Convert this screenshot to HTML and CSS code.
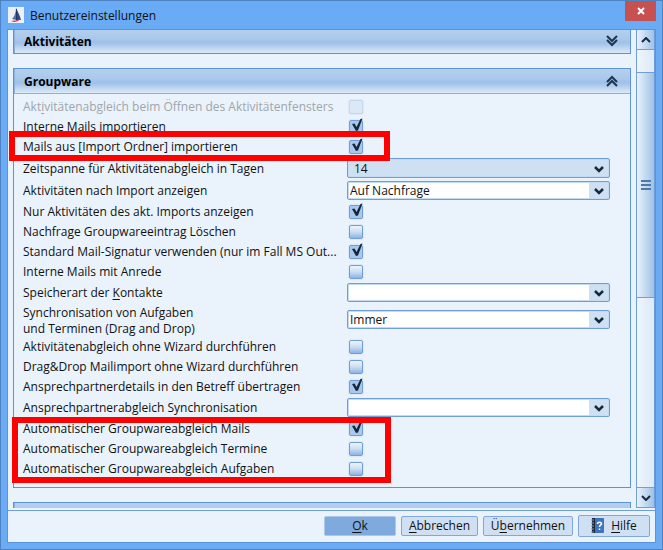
FILE: index.html
```html
<!DOCTYPE html>
<html lang="de">
<head>
    <meta charset="UTF-8">
    <meta name="viewport" content="width=device-width, initial-scale=1.0">
    <title>Benutzereinstellungen</title>
    <link rel="stylesheet" href="styles.css">
</head>
<body>
    <div class="window">
        <header class="titlebar">
            <svg class="app-icon" viewBox="0 0 16 16" aria-hidden="true">
                <rect width="16" height="16" fill="#eef0f5"/>
                <path d="M8 1v12h5C12 9 10 5 8 1z" fill="#274b86"/>
                <path d="M8 1C8 6 6 10 4 12l4 1z" fill="#54709c"/>
                <path d="M8 2h1v11H8z" fill="#1c3768"/>
                <path d="M3 14c3 0 6-1 9-2-1 2-4 3-6 3z" fill="#d0364a"/>
            </svg>
            <h1>Benutzereinstellungen</h1>
            <button class="close" type="button" aria-label="Schließen">
                <svg viewBox="0 0 8 8" aria-hidden="true"><path d="M1 1l6 6M7 1L1 7" stroke="#fff" stroke-width="2"/></svg>
            </button>
        </header>

        <form class="content">
            <div class="scroll-area">
                <div class="panels">
                    <section class="panel">
                        <div class="panel-header">
                            <h2>Aktivitäten</h2>
                            <svg class="chevron" viewBox="0 0 12 12" aria-hidden="true"><path d="M1 1l5 5 5-5M1 5l5 5 5-5"/></svg>
                        </div>
                    </section>

                    <section class="panel">
                        <div class="panel-header">
                            <h2>Groupware</h2>
                            <svg class="chevron" viewBox="0 0 12 12" aria-hidden="true"><path d="M1 7l5-5 5 5M1 11l5-5 5 5"/></svg>
                        </div>
                        <div class="panel-body">
                            <div class="row disabled">
                                <label for="openWindow">Akt<u>i</u>vitätenabgleich beim Öffnen des Aktivitätenfensters</label>
                                <input type="checkbox" id="openWindow" disabled>
                            </div>
                            <div class="row">
                                <label for="internImport">Interne Mails importieren</label>
                                <input type="checkbox" id="internImport" checked>
                            </div>
                            <div class="highlight">
                                <div class="row">
                                    <label for="folderImport">Mails aus [Import Ordner] importieren</label>
                                    <input type="checkbox" id="folderImport" checked>
                                </div>
                            </div>
                            <div class="row select-row days">
                                <label for="days">Zeitspanne für Aktivitätenabgleich in Tagen</label>
                                <select id="days"><option>14</option></select>
                            </div>
                            <div class="row select-row">
                                <label for="showAfter">Aktivitäten nach Import anzeigen</label>
                                <select id="showAfter"><option>Auf Nachfrage</option></select>
                            </div>
                            <div class="row">
                                <label for="onlyCurrent">Nur Aktivitäten des akt. Imports anzeigen</label>
                                <input type="checkbox" id="onlyCurrent" checked>
                            </div>
                            <div class="row">
                                <label for="askDelete">Nachfrage Groupwareeintrag Löschen</label>
                                <input type="checkbox" id="askDelete">
                            </div>
                            <div class="row">
                                <label for="signature">Standard Mail-Signatur verwenden (nur im Fall MS Out...</label>
                                <input type="checkbox" id="signature" checked>
                            </div>
                            <div class="row">
                                <label for="salutation">Interne Mails mit Anrede</label>
                                <input type="checkbox" id="salutation">
                            </div>
                            <div class="row select-row">
                                <label for="contacts">Speicherart der <u>K</u>ontakte</label>
                                <select id="contacts"><option></option></select>
                            </div>
                            <div class="row select-row two-lines">
                                <label for="sync">Synchronisation von Aufgaben<br>und Terminen (Drag and Drop)</label>
                                <select id="sync"><option>Immer</option></select>
                            </div>
                            <div class="row">
                                <label for="noWizard">Aktivitätenabgleich ohne Wizard durchführen</label>
                                <input type="checkbox" id="noWizard">
                            </div>
                            <div class="row">
                                <label for="dragWizard">Drag&amp;Drop Mailimport ohne Wizard durchführen</label>
                                <input type="checkbox" id="dragWizard">
                            </div>
                            <div class="row">
                                <label for="subject">Ansprechpartnerdetails in den Betreff übertragen</label>
                                <input type="checkbox" id="subject" checked>
                            </div>
                            <div class="row select-row">
                                <label for="contactSync">Ansprechpartnerabgleich Synchronisation</label>
                                <select id="contactSync"><option></option></select>
                            </div>
                            <div class="highlight auto">
                                <div class="row">
                                    <label for="autoMails">Automatischer Groupwareabgleich Mails</label>
                                    <input type="checkbox" id="autoMails" checked>
                                </div>
                                <div class="row">
                                    <label for="autoDates">Automatischer Groupwareabgleich Termine</label>
                                    <input type="checkbox" id="autoDates">
                                </div>
                                <div class="row">
                                    <label for="autoTasks">Automatischer Groupwareabgleich Aufgaben</label>
                                    <input type="checkbox" id="autoTasks">
                                </div>
                            </div>
                        </div>
                    </section>

                    <section class="panel">
                        <div class="panel-header"></div>
                    </section>
                </div>

                <div class="scrollbar">
                    <button class="scroll-button" type="button" aria-label="Nach oben">
                        <svg viewBox="0 0 10 6" aria-hidden="true"><path d="M1 5l4-4 4 4"/></svg>
                    </button>
                    <div class="track-top"></div>
                    <div class="thumb"><span></span><span></span><span></span></div>
                    <div class="track-bottom"></div>
                    <button class="scroll-button" type="button" aria-label="Nach unten">
                        <svg viewBox="0 0 10 6" aria-hidden="true"><path d="M1 1l4 4 4-4"/></svg>
                    </button>
                </div>
            </div>

            <footer class="buttons">
                <button class="primary" type="button"><span><u>O</u>k</span></button>
                <button type="button"><span><u>A</u>bbrechen</span></button>
                <button class="apply" type="button"><span>Ü<u>b</u>ernehmen</span></button>
                <button class="help" type="button">
                    <svg viewBox="0 0 14 16" aria-hidden="true">
                        <rect x="1" width="12" height="15" rx="1" fill="#3f74b8"/>
                        <rect x="1" width="3" height="15" fill="#1d2b40"/>
                        <path d="M0 2h3M0 5h3M0 8h3M0 11h3M0 14h3" stroke="#8996a8"/>
                        <path d="M6.5 6c0-2.500 4-2.500 4 0 0 1-2 1-2 3M8.500 10.500v1.500" fill="none" stroke="#fff" stroke-width="1.500"/>
                    </svg>
                    <span><u>H</u>ilfe</span>
                </button>
            </footer>
        </form>
    </div>
</body>
</html>
```
FILE: styles.css
```css
*, *::before, *::after {
    box-sizing: border-box;
}
body {
    margin: 0;
    font-family: "Open Sans", "Noto Sans", sans-serif;
    font-size: 12px;
    color: #111;
}
button, select {
    font: inherit;
    color: inherit;
}
h1, h2 {
    margin: 0;
}
u {
    text-underline-offset: 2px;
}
.window {
    display: flex;
    flex-direction: column;
    height: 100vh;
    padding: 0 6px 6px;
    border: 1px solid #4f82c0;
    background-color: #6aabf6;
}
.titlebar {
    display: flex;
    align-items: center;
    gap: 6px;
    height: 28px;
    padding-left: 1px;
    flex-shrink: 0;
}
.titlebar h1 {
    flex: 1;
    font-size: 12px;
    font-weight: normal;
}
.app-icon {
    width: 16px;
    height: 16px;
}
.close {
    display: flex;
    align-items: center;
    justify-content: center;
    align-self: flex-start;
    width: 31px;
    height: 20px;
    padding: 0;
    border: 0;
    background-color: #c75050;
}
.close svg {
    width: 8px;
    height: 8px;
}
.content {
    display: flex;
    flex-direction: column;
    flex: 1;
    min-height: 0;
    border: 1px solid #5b93d8;
    background-color: #eaf3fb;
}
.scroll-area {
    display: flex;
    flex: 1;
    gap: 5px;
    min-height: 0;
    padding-left: 5px;
    margin-bottom: 2px;
}
.panels {
    display: flex;
    flex-direction: column;
    flex: 1;
    gap: 14px;
    margin-left: -5px;
    padding-left: 5px;
    overflow: hidden;
}
.panel {
    flex-shrink: 0;
    border: 1px solid #5b93d8;
}
.panel:first-child {
    margin-top: -2px;
}
.panel-header {
    display: flex;
    align-items: center;
    justify-content: space-between;
    height: 25px;
    padding: 0 12px 0 9px;
    border: 1px solid #8ab1e0;
    border-width: 0 0 1px 1px;
    background: linear-gradient(#b6d0ee, #a9c8ea 40%, #9fc1e8 58%, #dce9f7);
}
.panel:first-child .panel-header {
    height: 24px;
    border-bottom: 0;
}
.panel-header h2 {
    font-size: 12px;
    font-weight: bold;
    color: #000;
}
.chevron {
    width: 12px;
    height: 12px;
    fill: none;
    stroke: #1c3550;
    stroke-width: 2;
}
.panel-body {
    padding: 3px 20px 8px 9px;
}
.row {
    display: flex;
    align-items: center;
    height: 20px;
}
.row label {
    width: 324px;
    flex-shrink: 0;
    white-space: nowrap;
    line-height: 16px;
}
.disabled label {
    color: #a0a5ab;
}
.select-row {
    height: 22px;
}
.two-lines {
    height: 33px;
}
input[type="checkbox"] {
    appearance: none;
    position: relative;
    width: 14px;
    height: 14px;
    margin: 0 2px;
    border: 1px solid #6f9fda;
    border-radius: 2px;
    background: linear-gradient(#edf4fb, #c9ddf3 50%, #8db4e2);
    box-shadow: 0 0 0 1px #dce9f6;
}
input[type="checkbox"]:disabled {
    border-color: #c3d8f0;
    background: #dce8f5;
}
input[type="checkbox"]:checked {
    background: #a9c8eb;
}
input[type="checkbox"]:checked::before {
    content: "";
    position: absolute;
    top: -3px;
    left: 1px;
    width: 12px;
    height: 14px;
    background: url("data:image/svg+xml,%3Csvg xmlns='http://www.w3.org/2000/svg' viewBox='0 0 12 14'%3E%3Cpath d='M1 6l2.500-.500 2 3.500L9.500 1l2-.500L7 12.500l-2 .500z' fill='%2315283f'/%3E%3C/svg%3E");
}
select {
    appearance: none;
    flex: 1;
    min-width: 0;
    height: 19px;
    margin: 0 0 1px;
    padding: 0 22px 0 2px;
    border: 1px solid #6f9fda;
    border-radius: 2px;
    box-shadow: inset 0 0 0 1px #c3daf3;
    background: url("data:image/svg+xml,%3Csvg xmlns='http://www.w3.org/2000/svg' viewBox='0 0 20 17'%3E%3Crect width='20' height='17' fill='%23d0e0f3'/%3E%3Cpath d='M6 7l4 4 4-4' fill='none' stroke='%23152b42' stroke-width='2.500'/%3E%3C/svg%3E") right center / 20px 17px no-repeat #fff;
}
.two-lines select {
    margin-bottom: 3px;
}
.days {
    height: 23px;
}
.days select {
    height: 20px;
    padding-left: 6px;
    background-color: #d0e0f3;
}
.highlight {
    position: relative;
}
.highlight::after {
    content: "";
    position: absolute;
    top: -6px;
    bottom: -4px;
    left: -14px;
    width: 381px;
    border: 6px solid #f00;
    pointer-events: none;
}
.highlight.auto::after {
    top: -2px;
    left: -11px;
    width: 379px;
}
.scrollbar {
    display: flex;
    flex-direction: column;
    width: 19px;
    border: 1px solid #6f9fda;
    border-top: 0;
}
.scroll-button {
    display: flex;
    align-items: center;
    justify-content: center;
    height: 19px;
    padding: 0;
    border: 0;
    background: linear-gradient(to right, #eaf2fb, #9fc1e8);
}
.scroll-button svg {
    width: 10px;
    height: 6px;
    fill: none;
    stroke: #152b42;
    stroke-width: 2;
}
.track-top, .track-bottom {
    border: 1px solid #6f9fda;
    border-width: 1px 0;
    background: linear-gradient(to right, #eef5fc, #dce9f7);
}
.track-top {
    flex: 22;
}
.track-bottom {
    flex: 191;
}
.thumb {
    display: flex;
    flex-direction: column;
    align-items: center;
    justify-content: center;
    gap: 2px;
    flex: 226;
    background: linear-gradient(to right, #eaf2fb, #9fc1e8);
}
.thumb span {
    width: 10px;
    height: 2px;
    background-color: #4f78a8;
}
.buttons {
    display: flex;
    align-items: center;
    justify-content: flex-end;
    gap: 5px;
    height: 32px;
    padding: 0 5px 2px;
    border-top: 1px solid #6f9fda;
    flex-shrink: 0;
}
.buttons button {
    display: flex;
    align-items: center;
    justify-content: center;
    gap: 6px;
    min-width: 77px;
    height: 20px;
    padding: 0 6px;
    border: 1px solid #7fa9de;
    border-radius: 2px;
    background-color: #d0e0f3;
}
.buttons .primary {
    min-width: 72px;
    border-color: #a9c8ea;
    background-color: #7faadd;
}
.buttons .apply {
    min-width: 90px;
}
.buttons .help {
    min-width: 72px;
    height: 22px;
}
.help svg {
    width: 14px;
    height: 16px;
}
```
